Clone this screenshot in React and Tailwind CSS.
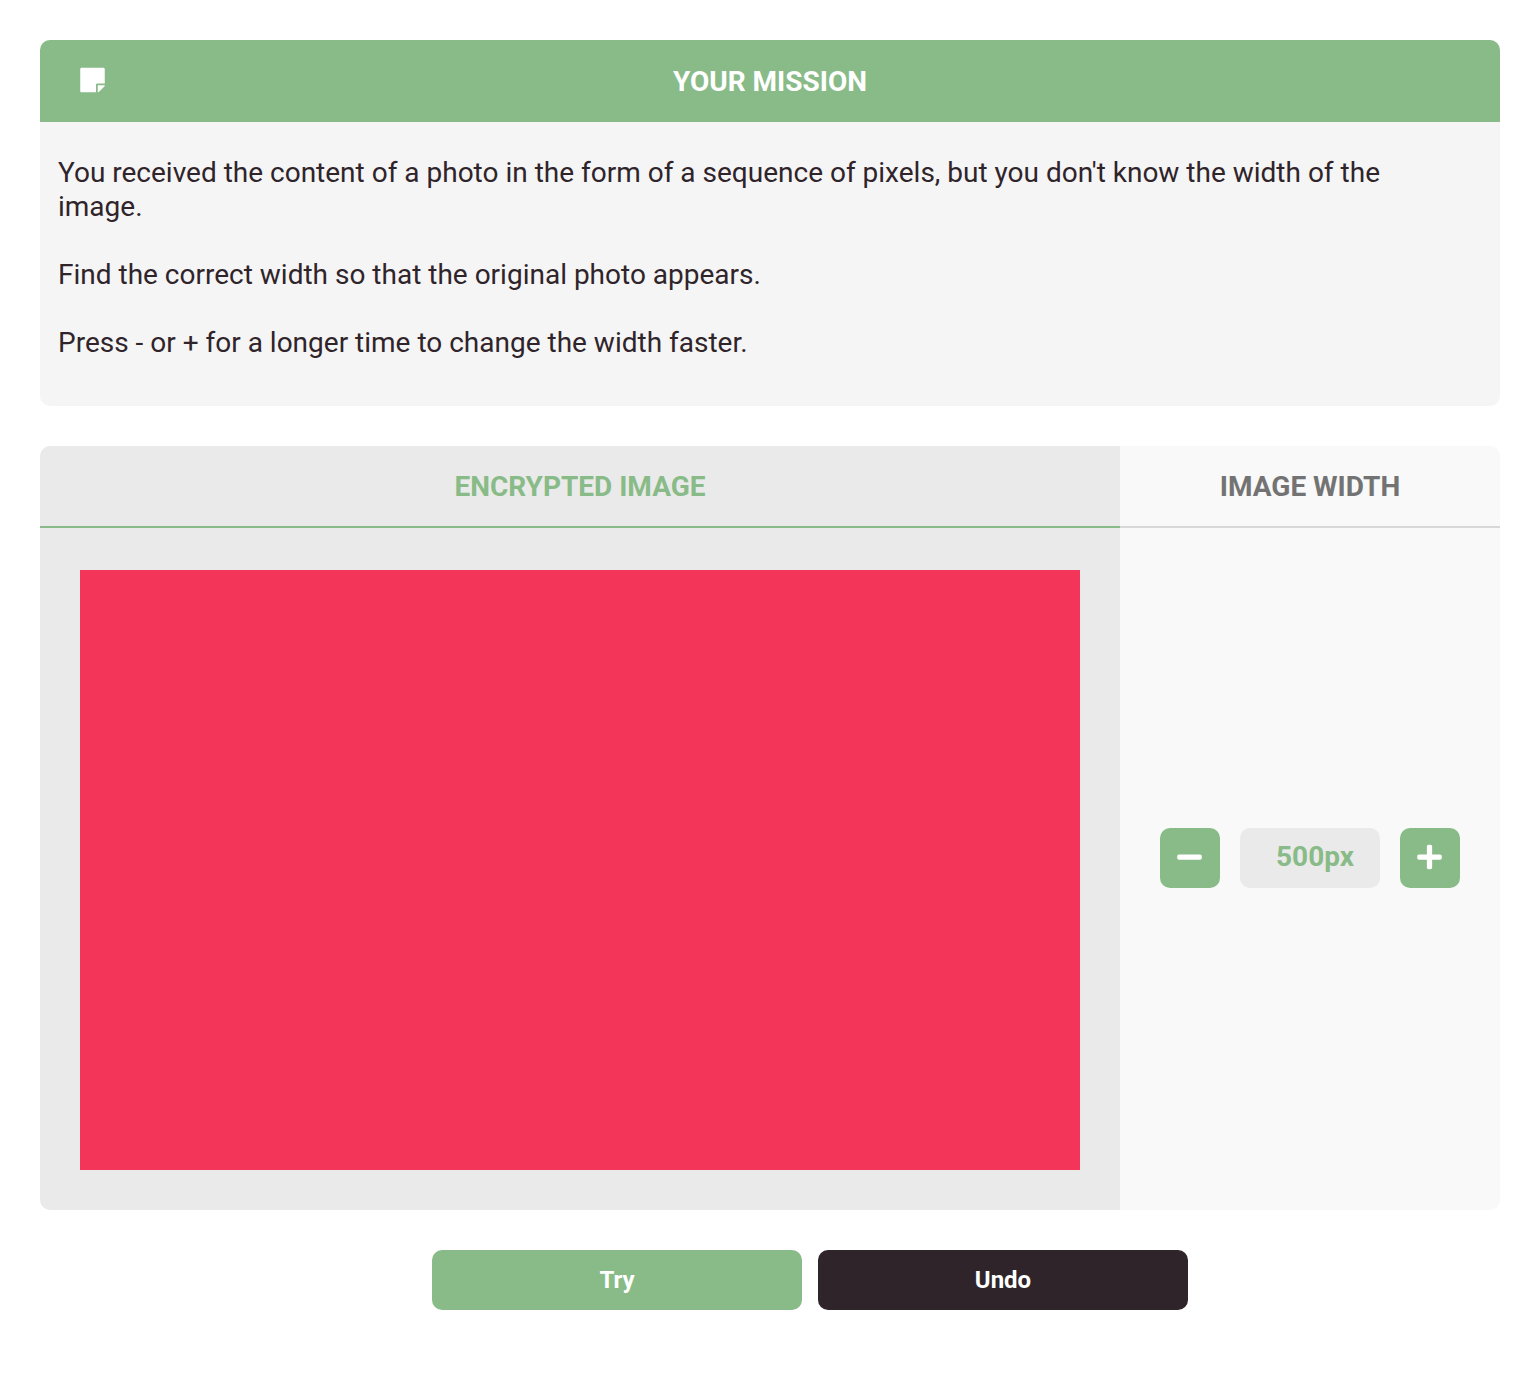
import { useState } from "react";

function StickyNote() {
  return (
    <svg viewBox="0 0 448 512" className="mb-[5px] h-7 w-[25px]" fill="currentColor" aria-hidden="true">
      <path d="M312 320h136V56c0-13.300-10.700-24-24-24H24C10.700 32 0 42.700 0 56v400c0 13.300 10.700 24 24 24h264V344c0-13.200 10.800-24 24-24zm129 55l-98 98c-4.500 4.500-10.600 7-17 7h-6V352h128v6.100c0 6.300-2.500 12.400-7 16.900z" />
    </svg>
  );
}

function StepButton({ label, onClick, children }) {
  return (
    <button
      type="button"
      aria-label={label}
      onClick={onClick}
      className="flex size-[60px] shrink-0 items-center justify-center rounded-[10px] bg-[#89bb88] pr-px pb-0.5 text-white"
    >
      <svg viewBox="0 0 448 512" className="h-7 w-[25px]" fill="currentColor" aria-hidden="true">
        {children}
      </svg>
    </button>
  );
}

export default function App() {
  const [width, setWidth] = useState("500px");
  const step = (n) => setWidth((w) => `${Math.max(1, (parseInt(w, 10) || 0) + n)}px`);

  return (
    <main className="bg-white p-10 font-['Roboto',sans-serif] text-[28px] leading-[34px] text-[#30242b]">
      <section className="overflow-hidden rounded-[10px] bg-[#f5f5f5]">
        <header className="grid grid-cols-[1fr_auto_1fr] items-center bg-[#89bb88] px-10 pt-[25px] pb-[23px] text-white">
          <StickyNote />
          <h1 className="font-bold">YOUR MISSION</h1>
        </header>
        <div className="space-y-[34px] pt-[34px] pr-[100px] pb-[46px] pl-[18px]">
          <p>
            You received the content of a photo in the form of a sequence of pixels, but you don't
            know the width of the image.
          </p>
          <p>Find the correct width so that the original photo appears.</p>
          <p>Press - or + for a longer time to change the width faster.</p>
        </div>
      </section>

      <div className="mt-10 flex overflow-hidden rounded-[10px]">
        <section className="flex-1 bg-[#eaeaea]">
          <h2 className="border-b-2 border-[#89bb88] pt-6 pb-[22px] text-center font-bold text-[#89bb88]">
            ENCRYPTED IMAGE
          </h2>
          <div className="px-10 pt-[42px] pb-10">
            <div className="aspect-[5/3] bg-[#f23558]" role="img" aria-label="Encrypted image" />
          </div>
        </section>
        <section className="flex w-[380px] flex-col bg-[#f9f9f9]">
          <h2 className="border-b-2 border-[#d8d8d8] pt-6 pb-[22px] text-center font-bold text-[#737373]">
            IMAGE WIDTH
          </h2>
          <div className="flex flex-1 items-center gap-5 px-10 pb-[22px]">
            <StepButton label="Decrease width" onClick={() => step(-1)}>
              <path d="M416 208H32c-17.670 0-32 14.330-32 32v32c0 17.670 14.330 32 32 32h384c17.670 0 32-14.330 32-32v-32c0-17.670-14.330-32-32-32z" />
            </StepButton>
            <input
              type="text"
              aria-label="Image width"
              value={width}
              onChange={(e) => setWidth(e.target.value)}
              className="h-[60px] min-w-0 flex-1 rounded-[10px] bg-[#eaeaea] pb-1 pl-[10px] text-center font-bold text-[#89bb88] outline-none"
            />
            <StepButton label="Increase width" onClick={() => step(1)}>
              <path d="M416 208H272V64c0-17.670-14.330-32-32-32h-32c-17.670 0-32 14.330-32 32v144H32c-17.670 0-32 14.330-32 32v32c0 17.670 14.330 32 32 32h144v144c0 17.670 14.330 32 32 32h32c17.670 0 32-14.330 32-32V304h144c17.670 0 32-14.330 32-32v-32c0-17.670-14.330-32-32-32z" />
            </StepButton>
          </div>
        </section>
      </div>

      <div className="mt-10 flex justify-center gap-4 pl-20 text-2xl font-bold text-white">
        <button type="button" className="h-[60px] w-[370px] rounded-[10px] bg-[#89bb88]">
          Try
        </button>
        <button type="button" className="h-[60px] w-[370px] rounded-[10px] bg-[#30242b]">
          Undo
        </button>
      </div>
    </main>
  );
}
